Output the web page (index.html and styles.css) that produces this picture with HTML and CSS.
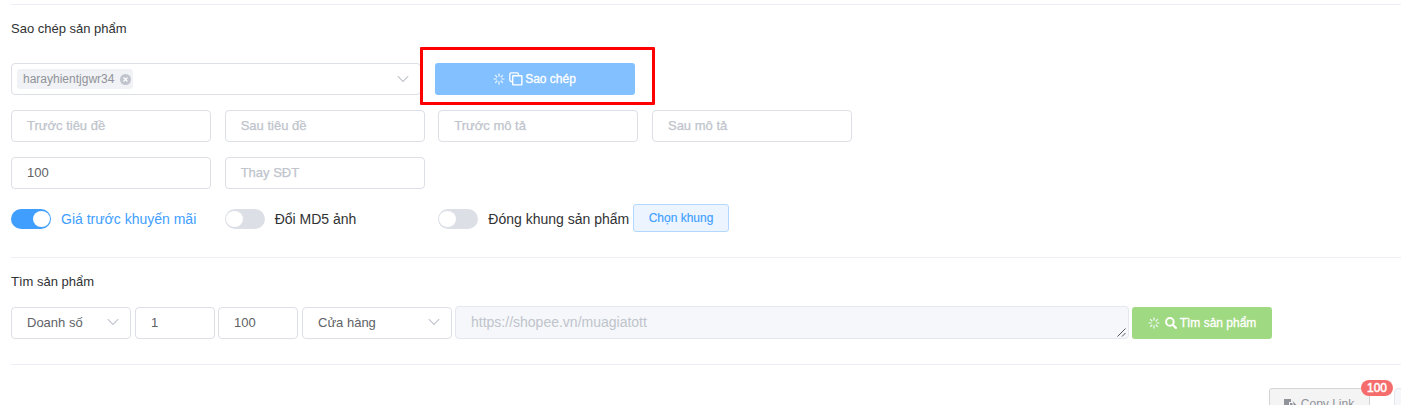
FILE: index.html
```html
<!DOCTYPE html>
<html lang="vi">
<head>
<meta charset="utf-8">
<title>Sao chép sản phẩm</title>
<link rel="stylesheet" href="styles.css">
</head>
<body>
<svg class="defs" width="0" height="0">
  <symbol id="spin" viewBox="0 0 12 12"><path d="M6 .6v3M6 8.4v3M.6 6h3M8.4 6h3M2.2 2.2l2.1 2.1M7.7 7.7l2.1 2.1M9.8 2.2L7.7 4.3M4.3 7.7L2.2 9.8" fill="none" stroke="currentColor" stroke-width="1.2"/></symbol>
  <symbol id="down" viewBox="0 0 12 8"><path d="M.8 1.2L6 6.4l5.2-5.2" fill="none" stroke="currentColor" stroke-width="1.1"/></symbol>
</svg>
<main class="page">
  <section class="panel copy">
    <h2 class="title"><span>Sao chép sản phẩm</span></h2>
    <div class="row account">
      <div class="field account-select">
        <span class="tag"><span>harayhientjgwr34</span><svg width="11" height="11" viewBox="0 0 11 11"><circle cx="5.5" cy="5.5" r="5.5" fill="#c0c4cc"/><path d="M3.5 3.5l4 4m0-4l-4 4" stroke="#fff" stroke-width="1.2"/></svg></span>
        <svg class="arrow" width="12" height="8"><use href="#down"/></svg>
      </div>
      <div class="highlight">
        <button class="btn primary"><svg class="spin" width="12" height="12"><use href="#spin"/></svg><svg class="copy-icon" width="14" height="14" viewBox="0 0 14 14"><path d="M3.500 9.5H2.2A1.4 1.4 0 0 1 .8 8.1V2.2A1.4 1.4 0 0 1 2.2.8h5.9a1.4 1.4 0 0 1 1.4 1.4v1.3" fill="none" stroke="#fff" stroke-width="1.3"/><rect x="3.7" y="3.7" width="9.2" height="9.2" rx=".6" fill="none" stroke="#fff" stroke-width="1.4"/></svg><span class="t-btn">Sao chép</span></button>
      </div>
    </div>
    <div class="grid">
      <div class="field hint"><span>Trước tiêu đề</span></div>
      <div class="field hint"><span>Sau tiêu đề</span></div>
      <div class="field hint"><span>Trước mô tả</span></div>
      <div class="field hint"><span>Sau mô tả</span></div>
      <div class="field"><span>100</span></div>
      <div class="field hint"><span>Thay SĐT</span></div>
    </div>
    <div class="switches">
      <label class="option on"><i class="switch"></i><span>Giá trước khuyến mãi</span></label>
      <label class="option"><i class="switch"></i><span>Đổi MD5 ảnh</span></label>
      <label class="option"><i class="switch"></i><span>Đóng khung sản phẩm</span></label>
      <button class="btn plain"><span>Chọn khung</span></button>
    </div>
  </section>
  <section class="panel search">
    <h2 class="title"><span>Tìm sản phẩm</span></h2>
    <div class="row filters">
      <div class="field sort"><span>Doanh số</span><svg class="arrow" width="12" height="8"><use href="#down"/></svg></div>
      <div class="field number from"><span>1</span></div>
      <div class="field number to"><span>100</span></div>
      <div class="field source"><span>Cửa hàng</span><svg class="arrow" width="12" height="8"><use href="#down"/></svg></div>
      <div class="field link"><span>https://shopee.vn/muagiatott</span><svg class="grip" width="9" height="9" viewBox="0 0 9 9"><path d="M.5 8.5l8-8M5 8.5L8.500 5" stroke="#555" stroke-width="1"/></svg></div>
      <button class="btn success"><svg class="spin" width="12" height="12"><use href="#spin"/></svg><svg class="find-icon" width="12" height="12" viewBox="0 0 12 12"><circle cx="4.9" cy="4.9" r="3.8" fill="none" stroke="#fff" stroke-width="2"/><path d="M7.700 7.700l3.200 3.200" stroke="#fff" stroke-width="2.200" stroke-linecap="round"/></svg><span class="t-btn">Tìm sản phẩm</span></button>
    </div>
  </section>
  <section class="panel results">
    <div class="copy-link">
      <button class="btn info"><svg width="13" height="13" viewBox="0 0 13 13"><path d="M0 1h7v3H5v7H0z" fill="#909399"/><path d="M6 5h2.500v3.500H12V13H6z" fill="#909399"/><path d="M8.500 2.500L12.800 7.500H9.500V5z" fill="#909399"/></svg><span>Copy Link</span></button>
      <span class="badge">100</span>
    </div>
    <div class="field next"></div>
  </section>
</main>
</body>
</html>
```
FILE: styles.css
```css
* { box-sizing: border-box; }
body { margin: 0; background: #fff; font: 13px "Liberation Sans", Arial, sans-serif; color: #606266; }
.defs { position: absolute; }
svg { flex: none; }
span { white-space: nowrap; }
.page { height: 405px; overflow: hidden; padding: 4px 0 0 11px; }
.panel { border-top: 1px solid #ebeef5; }
.copy { height: 253px; }
.search { height: 107px; }
.title { margin: 0; height: 48px; line-height: 48px; font-size: 13px; font-weight: 400; color: #303133; }
.copy .title { height: 42px; }
.row { display: flex; }
.account { height: 58px; margin-bottom: 5px; align-items: flex-start; }
.field { display: flex; align-items: center; height: 32px; padding: 0 15px 2px; border: 1px solid #dcdfe6; border-radius: 4px; background: #fff; }
.hint { color: #c0c4cc; -webkit-text-stroke: .25px; }
.arrow { margin-left: auto; color: #c0c4cc; }
.account-select { width: 410px; margin-top: 16px; padding: 0 11px 0 5px; }
.tag { display: flex; align-items: center; gap: 6px; height: 20px; padding: 0 2px 0 6px; border-radius: 3px; background: #f0f2f5; color: #909399; font-size: 12px; }
.highlight { position: relative; width: 235px; height: 58px; margin-left: -1px; padding: 13px 0 0 12px; border: 3px solid #f00; border-radius: 1px; background: #fff; }
.btn { display: flex; align-items: center; justify-content: center; border: 0; border-radius: 3px; padding: 0; color: #fff; font: 12px "Liberation Sans", Arial, sans-serif; }
.t-btn { -webkit-text-stroke: .3px; }
.primary { width: 200px; height: 32px; padding-right: 1px; background: #83c0ff; }
.spin { margin-right: 4px; color: #f4faff; }
.copy-icon { margin-right: 2px; }
.find-icon { margin: 0 3px 0 1px; }
.grid { display: grid; grid-template-columns: repeat(4, 200px); gap: 15px 13.670px; }
.switches { display: flex; align-items: center; height: 28px; margin-top: 15px; }
.option { display: flex; align-items: center; width: 213.670px; height: 30px; padding-top: 2px; font-size: 14px; color: #303133; }
.option:nth-child(3) { width: 194.700px; }
.switch { display: flex; align-items: center; width: 40px; height: 20px; padding: 0 1px; margin-right: 10px; border-radius: 10px; background: #dcdfe6; }
.switch::before { content: ""; width: 17px; height: 16px; border-radius: 50%; background: #fff; }
.on { color: #409eff; }
.on .switch { justify-content: flex-end; background: #409eff; }
.plain { width: 96px; height: 28px; border: 1px solid #b3d8ff; background: #ecf5ff; color: #409eff; -webkit-text-stroke: .15px; }
.filters { align-items: flex-end; height: 33px; }
.sort { width: 120px; margin-right: 4px; padding-right: 11px; }
.number { width: 80px; }
.from { margin-right: 3px; }
.to { margin-right: 4px; }
.source { width: 150px; margin-right: 3px; padding-right: 11px; }
.link { width: 674px; height: 33px; margin-right: 3px; padding-right: 2px; background: #f5f7fa; border-color: #e4e7ed; color: #c0c4cc; font-size: 14px; padding-bottom: 0; }
.link span { padding-bottom: 2px; }
.grip { margin: auto 0 1px auto; }
.success { width: 140px; height: 32px; background: #9fd981; }
.results { display: flex; padding-top: 23px; }
.copy-link { position: relative; margin-left: 1258px; }
.info { width: 101px; height: 32px; border: 1px solid #d3d4d6; background: #f4f4f5; color: #909399; gap: 4px; padding-right: 1px; }
.badge { position: absolute; left: 92px; top: -8px; width: 32px; height: 16px; border-radius: 8px; background: #f56c6c; color: #fff; font-size: 12px; line-height: 17px; text-align: center; -webkit-text-stroke: .5px; }
.next { width: 40px; flex: none; margin-left: 24px; background: #f5f7fa; border-color: #e4e7ed; }
```
